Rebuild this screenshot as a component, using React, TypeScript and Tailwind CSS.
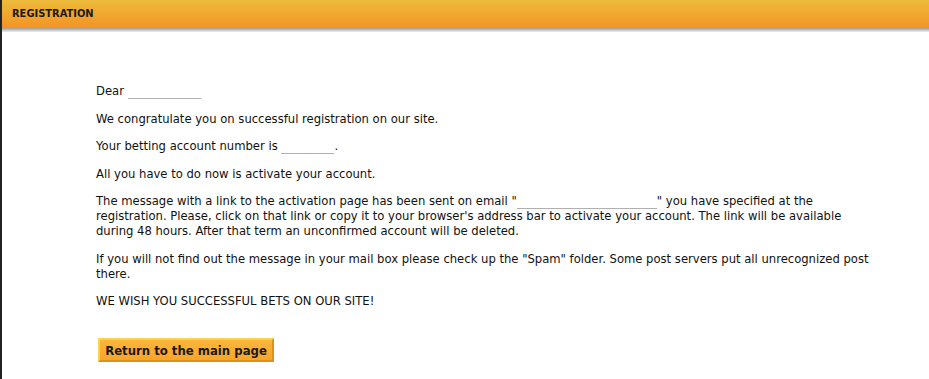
const blank = "inline-block h-px bg-[#b0b0b0] align-[-4px]";

export default function App() {
  return (
    <div
      className="min-h-[379px] border-l-2 border-[#222] bg-white text-[11.6px] text-[#111]"
      style={{ fontFamily: '"DejaVu Sans", Verdana, sans-serif' }}
    >
      <div
        className="flex h-[28px] items-center bg-gradient-to-b from-[#ecbb3b] to-[#f39323] pl-[10px] text-[11px] font-bold text-[#1a1a1a]"
        style={{ fontFamily: '"DejaVu Sans Condensed", "DejaVu Sans", sans-serif', fontStretch: "condensed" }}
      >
        REGISTRATION
      </div>
      <div className="h-[4px] bg-gradient-to-b from-[#9a9a9a] to-[#eeeeee]" />
      <div className="pl-[94px] pr-[52px] pt-[52px] leading-[15px]">
        <p>
          Dear <span className={`${blank} w-[73px]`} />
        </p>
        <p className="mt-[12.5px]">We congratulate you on successful registration on our site.</p>
        <p className="mt-[12.5px]">
          Your betting account number is <span className={`${blank} w-[53px]`} />.
        </p>
        <p className="mt-[12.5px]">All you have to do now is activate your account.</p>
        <p className="mt-[12.5px]">
          The message with a link to the activation page has been sent on email "
          <span className={`${blank} w-[140px]`} />" you have specified at the registration. Please, click on that
          link or copy it to your browser's address bar to activate your account. The link will be available during 48
          hours. After that term an unconfirmed account will be deleted.
        </p>
        <p className="mt-[12.5px]">
          If you will not find out the message in your mail box please check up the "Spam" folder. Some post servers
          put all unrecognized post there.
        </p>
        <p className="mt-[12.5px]">WE WISH YOU SUCCESSFUL BETS ON OUR SITE!</p>
        <button
          className="ml-[2px] mt-[29px] h-[24px] w-[176px] border-[2px] border-t-[#fcd34d] border-l-[#fcd34d] border-b-[#d8921f] border-r-[#d8921f] bg-gradient-to-b from-[#fbb63c] to-[#f9a42a] text-[13px] font-bold leading-none text-[#1a1a1a]"
          style={{ fontFamily: '"DejaVu Sans Condensed", "DejaVu Sans", sans-serif', fontStretch: "condensed" }}
        >
          Return to the main page
        </button>
      </div>
    </div>
  );
}
